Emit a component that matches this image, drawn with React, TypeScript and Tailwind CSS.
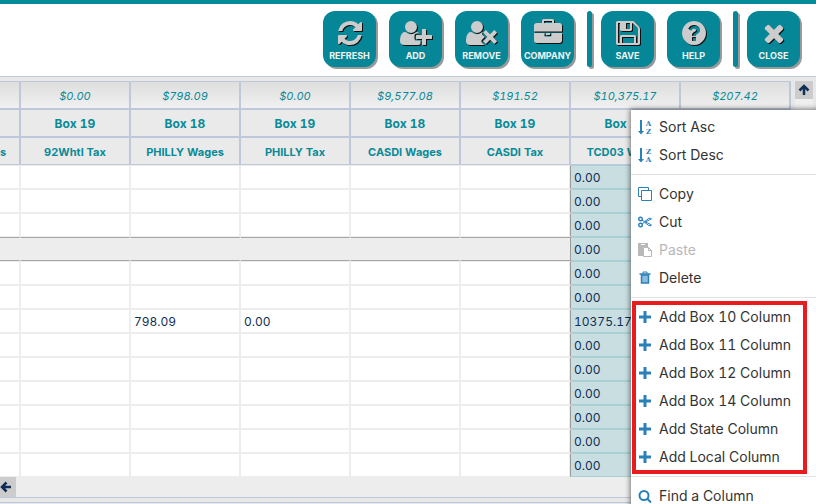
import React from 'react'

const userPath =
  'M704 896q-159 0-271.5-112.5t-112.5-271.5 112.5-271.5 271.5-112.5 271.5 112.5 112.5 271.5-112.5 271.5-271.5 112.5z'

const icons = {
  refresh: {
    width: 1792,
    path: 'M1639 1056q0 5-1 7-64 268-268 434.5t-478 166.5q-146 0-282.5-55t-243.5-157l-129 129q-19 19-45 19t-45-19-19-45v-448q0-26 19-45t45-19h448q26 0 45 19t19 45-19 45l-137 137q71 66 161 102t187 36q134 0 250-65t186-179q11-17 53-117 8-23 30-23h192q13 0 22.5 9.5t9.5 22.5zm25-800v448q0 26-19 45t-45 19h-448q-26 0-45-19t-19-45 19-45l138-138q-148-137-349-137-134 0-250 65t-186 179q-11 17-53 117-8 23-30 23h-199q-13 0-22.5-9.5t-9.5-22.5v-7q65-268 270-434.5t480-166.5q146 0 284 55.5t245 156.5l130-129q19-19 45-19t45 19 19 45z',
  },
  add: {
    width: 2048,
    path: `${userPath}M1664 1024h352q13 0 22.5 9.5t9.5 22.5v192q0 13-9.5 22.5t-22.5 9.5h-352v352q0 13-9.5 22.5t-22.5 9.5h-192q-13 0-22.5-9.5t-9.5-22.5v-352h-352q-13 0-22.5-9.5t-9.5-22.5v-192q0-13 9.5-22.5t22.5-9.5h352v-352q0-13 9.5-22.5t22.5-9.5h192q13 0 22.5 9.5t9.5 22.5v352zM928 1248q0 52 38 90t90 38h256v238q-68 50-171 50h-874q-121 0-194-69t-73-190q0-53 3.5-103.5t14-109 26.5-108.5 43-97.5 62-81 85.5-53.5 111.5-20q19 0 39 17 79 61 154.5 91.5t164.5 30.5 164.5-30.5 154.5-91.5q20-17 39-17 132 0 217 96h-223q-52 0-90 38t-38 90v192z`,
  },
  remove: {
    width: 2048,
    path: `${userPath}M1725 1152l249 249q9 9 9 23t-9 22l-136 136q-8 9-22 9t-23-9l-249-249-249 249q-9 9-23 9t-22-9l-136-136q-9-8-9-22t9-23l249-249-249-249q-9-9-9-23t9-22l136-136q8-9 22-9t23 9l249 249 249-249q9-9 23-9t22 9l136 136q9 8 9 22t-9 23zM1205 1152l-181 181q-38 38-38 91t38 90l136 136q5 6 12 10-20 4-31 4h-874q-121 0-194-69t-73-190q0-53 3.500-103.500t14-109 26.500-108.500 43-97.500 62-81 85.500-53.500 111.500-20q19 0 39 17 79 61 154.500 91.500t164.500 30.500 164.500-30.500 154.500-91.500q20-17 39-17h13q-50 40-50 98 0 53 38 91z`,
  },
  company: {
    width: 1792,
    path: 'M640 256h512v-128h-512v128zm1152 640v480q0 66-47 113t-113 47h-1472q-66 0-113-47t-47-113v-480h672v160q0 26 19 45t45 19h320q26 0 45-19t19-45v-160h672zm-768 0v128h-256v-128h256zm768-480v384h-1792v-384q0-66 47-113t113-47h352v-160q0-40 28-68t68-28h576q40 0 68 28t28 68v160h352q66 0 113 47t47 113z',
  },
  save: {
    width: 1792,
    path: 'M512 1536h768v-384h-768v384zm896 0h128v-896q0-14-10-38.5t-20-34.5l-281-281q-10-10-34-20t-39-10v416q0 40-28 68t-68 28h-576q-40 0-68-28t-28-68v-416h-128v1280h128v-416q0-40 28-68t68-28h832q40 0 68 28t28 68v416zm-384-928v-320q0-13-9.5-22.5t-22.5-9.5h-192q-13 0-22.5 9.5t-9.5 22.5v320q0 13 9.5 22.5t22.5 9.5h192q13 0 22.5-9.5t9.5-22.5zm640 32v928q0 40-28 68t-68 28h-1344q-40 0-68-28t-28-68v-1344q0-40 28-68t68-28h928q40 0 88 20t76 48l280 280q28 28 48 76t20 88z',
  },
  help: {
    width: 1792,
    path: 'M1024 1376v-192q0-14-9-23t-23-9h-192q-14 0-23 9t-9 23v192q0 14 9 23t23 9h192q14 0 23-9t9-23zm256-672q0-88-55.5-163t-138.5-116-170-41q-243 0-371 213-15 24 8 42l132 100q7 6 19 6 16 0 25-12 53-68 86-92 34-24 86-24 48 0 85.5 26t37.5 59q0 38-20 61t-68 45q-63 28-115.5 86.5t-52.5 125.5v36q0 14 9 23t23 9h192q14 0 23-9t9-23q0-19 21.5-49.5t54.5-49.5q32-18 49-28.5t46-35 44.5-48 28-60.5 12.5-81zm384 192q0 209-103 385.5t-279.5 279.5-385.5 103-385.5-103-279.5-279.5-103-385.5 103-385.5 279.5-279.5 385.5-103 385.5 103 279.5 279.5 103 385.5z',
  },
  close: {
    width: 1792,
    path: 'M1490 1322q0 40-28 68l-136 136q-28 28-68 28t-68-28l-294-294-294 294q-28 28-68 28t-68-28l-136-136q-28-28-28-68t28-68l294-294-294-294q-28-28-28-68t28-68l136-136q28-28 68-28t68 28l294 294 294-294q28-28 68-28t68 28l136 136q28 28 28 68t-28 68l-294 294 294 294q28 28 28 68z',
  },
}

const ToolButton = ({
  icon,
  label,
}: {
  icon: keyof typeof icons
  label: string
}) => (
  <button className="flex h-14 w-[53px] shrink-0 cursor-pointer flex-col items-center rounded-xl bg-[#058797] pt-2 shadow-[2px_2px_0_#999999]">
    <svg
      viewBox={`0 0 ${icons[icon].width} 1792`}
      className="h-7 fill-[#cccccc] drop-shadow-[1px_1px_0_#111111]"
    >
      <path d={icons[icon].path} />
    </svg>
    <span className="text-[9px] leading-[18px] font-bold text-[#f2f2f2]">
      {label}
    </span>
  </button>
)

const Divider = () => (
  <div className="-mr-1 h-14 w-[5px] shrink-0 rounded-sm bg-[#058797] shadow-[2px_2px_0_#999999]"></div>
)

const SortIcon = ({ top, bottom }: { top: string; bottom: string }) => (
  <svg viewBox="0 0 14 16" className="h-4 w-3.5 fill-[#2a80b9]">
    <path d="M2 1h2v11h2L3 15.500 0 12h2z" />
    <text
      x="10.500"
      y="7"
      textAnchor="middle"
      className="font-['DejaVu_Serif',serif] text-[7px] font-bold"
    >
      {top}
    </text>
    <text
      x="10.500"
      y="15"
      textAnchor="middle"
      className="font-['DejaVu_Serif',serif] text-[7px] font-bold"
    >
      {bottom}
    </text>
  </svg>
)

const CopyIcon = () => (
  <svg
    viewBox="0 0 14 14"
    className="h-3.5 w-3.5 fill-none stroke-[#2a80b9]"
  >
    <path d="M3.500 9.500h-3v-9h10v3M3.500 3.500h10v10h-10z" />
  </svg>
)

const CutIcon = () => (
  <svg
    viewBox="0 0 14 14"
    className="h-3.5 w-3.5 fill-none stroke-[#2a80b9]"
  >
    <circle cx="2.500" cy="4" r="1.800" strokeWidth="1.400" />
    <circle cx="2.500" cy="10" r="1.800" strokeWidth="1.400" />
    <path d="M4 5.200l3 1.500 6.500 3.200-.5.800-2 0-4-3M4 8.800l3-1.800 6.500-3-.5-.7-2 0-4 3" />
  </svg>
)

const PasteIcon = () => (
  <svg viewBox="0 0 14 14" className="h-3.5 w-3.5 fill-[#b8b8b8]">
    <path d="M0 0h10v4H5v9H0z" />
    <path d="M3 1.500h4" className="stroke-white" />
    <path
      d="M5.500 4.500h5l3 3v6h-8zM10.500 4.500v3h3"
      className="fill-white stroke-[#b8b8b8]"
    />
  </svg>
)

const DeleteIcon = () => (
  <svg viewBox="0 0 14 14" className="h-3.5 w-3.5 stroke-[#2a80b9]">
    <path d="M5 2.500v-1.500h4v1.500" fill="none" />
    <path d="M1.500 3h11" strokeWidth="1.500" />
    <path d="M3.500 4v8h7v-8z" strokeWidth="1.500" fill="#8fbbdb" />
  </svg>
)

const PlusIcon = () => (
  <svg viewBox="0 0 14 14" className="h-3.5 w-3.5 fill-[#2a80b9]">
    <path d="M5.500 1h3v4.500h4.500v3h-4.500v4.500h-3v-4.500h-4.500v-3h4.500z" />
  </svg>
)

const SearchIcon = () => (
  <svg
    viewBox="0 0 14 14"
    className="h-3.5 w-3.5 fill-none stroke-[#2a80b9] stroke-2"
  >
    <circle cx="6" cy="6.500" r="4.500" />
    <path d="M9.500 10l3.500 3.500" />
  </svg>
)

const MenuItem = ({
  icon,
  label,
  disabled,
}: {
  icon: React.ReactNode
  label: string
  disabled?: boolean
}) => (
  <button
    role="menuitem"
    disabled={disabled}
    className="flex h-7 w-full items-center gap-[7px] pl-[7px] text-left text-sm whitespace-nowrap text-[#333333] disabled:text-[#b8b8b8]"
  >
    {icon}
    <span>{label}</span>
  </button>
)

const Separator = () => <hr className="my-[5px] border-[#e2e2e2]" />

const addItems = [
  'Add Box 10 Column',
  'Add Box 11 Column',
  'Add Box 12 Column',
  'Add Box 14 Column',
  'Add State Column',
  'Add Local Column',
]

const ContextMenu = () => (
  <div
    role="menu"
    className="absolute top-[110px] left-[631px] w-[220px] bg-white pt-[3px] pb-1 shadow-[0_0_5px_1px_rgba(0,0,0,0.5)]"
  >
    <MenuItem icon={<SortIcon top="A" bottom="Z" />} label="Sort Asc" />
    <MenuItem icon={<SortIcon top="Z" bottom="A" />} label="Sort Desc" />
    <Separator />
    <MenuItem icon={<CopyIcon />} label="Copy" />
    <MenuItem icon={<CutIcon />} label="Cut" />
    <MenuItem icon={<PasteIcon />} label="Paste" disabled />
    <MenuItem icon={<DeleteIcon />} label="Delete" />
    <Separator />
    <div className="relative">
      {addItems.map((item) => (
        <MenuItem key={item} icon={<PlusIcon />} label={item} />
      ))}
      <div className="pointer-events-none absolute -top-0.5 -bottom-[3px] left-px w-[175px] border-4 border-[#e81c1f]"></div>
    </div>
    <Separator />
    <MenuItem icon={<SearchIcon />} label="Find a Column" />
  </div>
)

const columns = [
  { total: '', box: '', name: 's' },
  { total: '$0.00', box: 'Box 19', name: '92Whtl Tax' },
  { total: '$798.09', box: 'Box 18', name: 'PHILLY Wages' },
  { total: '$0.00', box: 'Box 19', name: 'PHILLY Tax' },
  { total: '$9,577.08', box: 'Box 18', name: 'CASDI Wages' },
  { total: '$191.52', box: 'Box 19', name: 'CASDI Tax' },
  { total: '$10,375.17', box: 'Box 18', name: 'TCD03 Wages' },
  { total: '$207.42', box: '', name: '' },
]

const SELECTED = 6
const rows = Array.from({ length: 13 }, (_, i) =>
  i === 6
    ? ['', '', '798.09', '0.00', '', '', '10375.17', '']
    : ['', '', '', '', '', '', '0.00', '']
)

// the row after the header and the rows round the shaded one have their own heights
const rowHeight = (row: number) => {
  if (row === 0 || row === 4) return 'h-[25px]'
  if (row === 2) return 'h-[23px]'
  return 'h-6'
}

const rowBorder = (row: number) => {
  if (row === 0 || row === 4) return 'border-t border-b-2'
  if (row === 2) return 'border-b'
  if (row === 3) return 'border-y'
  return 'border-b-2'
}

const cellColor = (row: number, col: number) => {
  if (col === SELECTED) return 'border-[#a9d0d3] bg-[#c9dee1]'
  if (row === 3) return 'border-x-[#ededed] border-y-[#a6a6a6] bg-[#ededed]'
  return 'border-[#ededed] bg-white'
}

const cellClass = (row: number, col: number) => {
  const side =
    col === SELECTED - 1
      ? 'border-r border-r-[#999999] shadow-[inset_-1px_0_0_#ededed]'
      : 'border-r-2'
  return `pt-0.5 pr-0 pb-0 pl-[3px] ${rowBorder(row)} ${cellColor(row, col)} ${side}`
}

const Grid = () => (
  <table className="w-[791px] shrink-0 table-fixed border-separate border-spacing-0">
    <colgroup>
      {columns.map((_, i) => (
        <col key={i} className={i === 0 ? 'w-[21px]' : 'w-[110px]'} />
      ))}
    </colgroup>
    <thead className="text-xs text-[#098a98]">
      <tr className="h-[29px]">
        {columns.map((c, i) => (
          <td
            key={i}
            className="border-t border-r-2 border-b-2 border-[#bfc8da] bg-linear-to-b from-[#dedede] to-[#f0f0f0] px-0 pt-0.5 pb-0 text-center text-[11px] italic"
          >
            {c.total}
          </td>
        ))}
      </tr>
      <tr className="h-7">
        {columns.map((c, i) => (
          <th
            key={i}
            className="border-r-2 border-b-2 border-[#bfc8da] bg-[#eaeaea] px-0 pt-0.5 pb-0 font-bold"
          >
            {c.box}
          </th>
        ))}
      </tr>
      <tr className="h-[27px]">
        {columns.map((c, i) => (
          <th
            key={i}
            className={`border-r-2 border-b border-[#bfc8da] bg-[#eaeaea] px-0 pt-0.5 pb-0 text-[11px] font-bold whitespace-nowrap ${
              i === 0 ? 'text-left' : 'text-center'
            }`}
          >
            {c.name}
          </th>
        ))}
      </tr>
    </thead>
    <tbody className="text-xs text-[#0f2e55]">
      {rows.map((row, r) => (
        <tr key={r} className={rowHeight(r)}>
          {row.map((value, c) => (
            <td key={c} className={cellClass(r, c)}>
              {value}
            </td>
          ))}
        </tr>
      ))}
    </tbody>
  </table>
)

const Arrow = ({ className }: { className: string }) => (
  <svg
    viewBox="0 0 12 12"
    className={`h-3 w-3 fill-none stroke-[#0f2e55] stroke-[2.5] ${className}`}
  >
    <path d="M6 11V2M1.500 6.500L6 2l4.500 4.500" />
  </svg>
)

const App = () => {
  return (
    <div className="relative flex min-h-screen flex-col overflow-hidden bg-[#e8e8e8] font-['Inter',sans-serif] tabular-nums">
      <header className="flex h-[76px] items-start justify-end gap-[13px] border-t-4 border-[#058c98] bg-white pt-[7px] pr-4">
        <ToolButton icon="refresh" label="REFRESH" />
        <ToolButton icon="add" label="ADD" />
        <ToolButton icon="remove" label="REMOVE" />
        <ToolButton icon="company" label="COMPANY" />
        <Divider />
        <ToolButton icon="save" label="SAVE" />
        <ToolButton icon="help" label="HELP" />
        <Divider />
        <ToolButton icon="close" label="CLOSE" />
      </header>
      <main className="border-y border-[#bfc8da] pt-1">
        <div className="flex h-[396px] gap-1 overflow-hidden">
          <Grid />
          <div className="w-[18px] shrink-0 bg-[#f0f0f0]">
            <button
              aria-label="Scroll up"
              className="flex h-[18px] w-full items-center justify-center bg-[#cccccc]"
            >
              <Arrow className="" />
            </button>
          </div>
        </div>
        <div className="flex h-5 bg-[#ededed]">
          <button
            aria-label="Scroll left"
            className="flex w-4 items-center justify-start bg-[#cccccc]"
          >
            <Arrow className="-rotate-90" />
          </button>
        </div>
      </main>
      <footer className="mt-1 grow border-t border-[#bfc8da]"></footer>
      <ContextMenu />
    </div>
  )
}

export default App
